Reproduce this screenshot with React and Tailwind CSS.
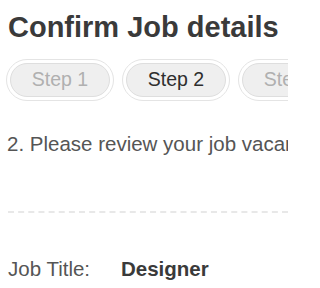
import React from "react";

const STEPS = [
  { label: "Step 1", state: "done" },
  { label: "Step 2", state: "active" },
  { label: "Step 3", state: "todo" },
];

function StepPill({ label, state }) {
  return (
    <div className="shrink-0 w-[108px] h-[42px] rounded-full border border-[#e4e4e4] bg-white p-[3px]">
      <div
        className={`h-full rounded-full border border-[#dedede] bg-[#efefef] flex items-center justify-center text-[19.5px] ${
          state === "active" ? "text-[#2e2e2e]" : "text-[#b0b0b0]"
        }`}
      >
        {label}
      </div>
    </div>
  );
}

export default function App() {
  return (
    <div className="w-[288px] h-[288px] overflow-hidden bg-white font-['Liberation_Sans',Arial,sans-serif]">
      {/* heading */}
      <h1 className="pl-[8px] pt-[10px] text-[29px] leading-[34px] font-bold text-[#3a3a3a] whitespace-nowrap">
        Confirm Job details
      </h1>

      {/* step pills */}
      <div className="flex gap-[8px] pl-[6px] mt-[15px]">
        {STEPS.map((s) => (
          <StepPill key={s.label} label={s.label} state={s.state} />
        ))}
      </div>

      <p className="pl-[7px] mt-[31px] text-[20.5px] leading-[24px] text-[#555] whitespace-nowrap">
        2. Please review your job vacancy details below
      </p>

      {/* divider */}
      <div className="ml-[8px] mt-[55px] border-t-2 border-dashed border-[#e8e8e8]" />

      <div className="flex pl-[8px] mt-[44px] text-[20.5px] leading-[24px] whitespace-nowrap">
        <span className="w-[113px] text-[#555]">Job Title:</span>
        <span className="font-bold text-[#3a3a3a]">Designer</span>
      </div>
    </div>
  );
}
